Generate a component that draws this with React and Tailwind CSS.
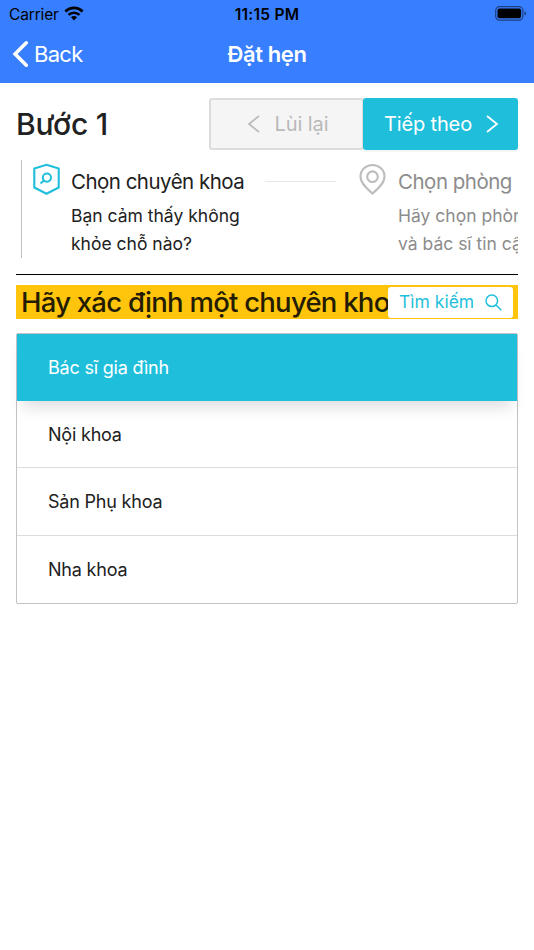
import React, { useState } from 'react';

const specialties = ['Bác sĩ gia đình', 'Nội khoa', 'Sản Phụ khoa', 'Nha khoa'];

const WifiIcon = () => (
  <svg className="w-5 h-[15px] ml-[5px] -mt-0.5" viewBox="0 0 20 15" fill="none">
    <path d="M1.4 5.4a12.4 12.4 0 0 1 17.2 0" stroke="#000" strokeWidth="2.8" />
    <path d="M4.5 8.9a8 8 0 0 1 11 0" stroke="#000" strokeWidth="2.6" />
    <path d="M10 14.4 6.9 11.3a4.4 4.4 0 0 1 6.2 0z" fill="#000" />
  </svg>
);

const BatteryIcon = () => (
  <svg className="w-8 h-[15px]" viewBox="0 0 32 15">
    <rect x="0.7" y="0.7" width="27.2" height="13.4" rx="3.8" fill="none" stroke="#1c3f80" strokeWidth="1.2" />
    <rect x="2.5" y="2.6" width="23.6" height="9.6" rx="2" fill="#000" />
    <path d="M29.5 5.2q1.7.6 1.7 2.2t-1.7 2.2z" fill="#1c3f80" />
  </svg>
);

const BackIcon = () => (
  <svg className="w-[18px] h-7" viewBox="0 0 18 28" fill="none">
    <path d="M15.3 2.8 4.1 14l11.2 11.2" stroke="#fff" strokeWidth="3.6" strokeLinecap="round" />
  </svg>
);

const ShieldIcon = () => (
  <svg className="w-[28px] h-8 shrink-0" viewBox="0 0 28 32" fill="none" stroke="#1fbfdc">
    <path d="M14.5 1.8 26.7 5.5v19L14.5 30.8 2.3 24.5v-19z" strokeWidth="2.1" />
    <circle cx="14.9" cy="14.6" r="4.1" strokeWidth="2" />
    <path d="m11.9 17.5-3.4 3.1" strokeWidth="2" />
  </svg>
);

const PinIcon = () => (
  <svg className="w-[28px] h-8 shrink-0" viewBox="0 0 28 32" fill="none" stroke="#bdbdbd" strokeWidth="2.1">
    <path d="M14.5 30.5c-5-4.4-12-10-12-17.1a12 11.4 0 0 1 24 0c0 7.1-7 12.7-12 17.1z" />
    <circle cx="14.5" cy="13.7" r="5.3" />
  </svg>
);

const App = () => {
  const [selected, setSelected] = useState(0);

  return (
    <div className="w-[534px] h-[950px] bg-white overflow-hidden font-['Inter',sans-serif] text-[#212121]">
      <header className="h-[83px] bg-[#387fff]">
        <div className="h-7 grid grid-cols-3 items-center pl-[7px] pr-[7px] text-black">
          <div className="flex items-center pl-0.5">
            <span className="text-[15.5px] tracking-[-0.15px] pt-px">Carrier</span>
            <WifiIcon />
          </div>
          <span className="text-center text-[15.5px] font-semibold tracking-[0.25px] pt-px">11:15 PM</span>
          <div className="flex justify-end -mt-px">
            <BatteryIcon />
          </div>
        </div>
        <div className="h-[52px] grid grid-cols-3 items-center pl-[11px] pr-[11px] text-white">
          <button className="flex items-center gap-[5px]">
            <BackIcon />
            <span className="text-[22px] tracking-[-0.7px]">Back</span>
          </button>
          <h1 className="text-center text-[22px] font-semibold tracking-[-0.4px]">Đặt hẹn</h1>
        </div>
      </header>

      <main className="px-4 pt-[15px]">
        <div className="flex h-[52px] items-center justify-between">
          <h2 className="text-[30px] font-medium tracking-[-0.2px]">Bước 1</h2>
          <div className="flex h-full text-[20px]">
            <button className="w-[155px] flex items-center justify-center gap-[15px] pl-0.5 bg-[#f5f5f5] border-2 border-[#dcdcdc] rounded-[3px] text-[#b9b9b9]">
              <svg className="w-[13px] h-[18px]" viewBox="0 0 13 18" fill="none" stroke="currentColor" strokeWidth="1.7">
                <path d="M12 1 2 9l10 8" />
              </svg>
              <span className="tracking-[-0.1px]">Lùi lại</span>
            </button>
            <button className="w-[155px] -ml-px flex items-center justify-center gap-[14px] pl-0.5 bg-[#1fbfdc] rounded-[3px] text-white shadow-[0_2px_1px_rgba(0,0,0,0.04)]">
              <span className="tracking-[-0.15px]">Tiếp theo</span>
              <svg className="w-[13px] h-[18px]" viewBox="0 0 13 18" fill="none" stroke="currentColor" strokeWidth="1.8">
                <path d="m1 1 10 8-10 8" />
              </svg>
            </button>
          </div>
        </div>

        <div className="mt-[10px] ml-[5px] h-[98px] flex overflow-hidden border-l border-[#bfbfc3]">
          <div className="w-[314px] shrink-0 flex gap-[11px] pl-[10px] pt-[3px]">
            <ShieldIcon />
            <div className="flex-1">
              <div className="h-[38px] flex items-center gap-[21px]">
                <h3 className="w-[173px] text-[20.5px] tracking-[-0.52px] whitespace-nowrap">Chọn chuyên khoa</h3>
                <div className="w-[71px] shrink-0 h-px bg-[#e8e8e8] -mt-0.5" />
              </div>
              <p className="w-[180px] pt-px text-[17.5px] leading-7">Bạn cảm thấy không<br />khỏe chỗ nào?</p>
            </div>
          </div>
          <div className="shrink-0 flex gap-[12px] pl-[22px] pt-[3px] text-[#8c8c8c]">
            <PinIcon />
            <div className="whitespace-nowrap">
              <h3 className="h-[38px] leading-[38px] text-[20.5px] tracking-[-0.5px]">Chọn phòng</h3>
              <p className="pt-px text-[17.5px] leading-7">Hãy chọn phòng<br />và bác sĩ tin cậy</p>
            </div>
          </div>
        </div>

        <hr className="mt-[16px] border-0 h-px bg-black" />

        <div className="mt-[10px] h-[34px] flex items-center bg-[#ffc40c] pl-[5px] pr-[5px]">
          <h2 className="w-[367px] overflow-hidden whitespace-nowrap text-[27.5px] leading-[34px] font-medium tracking-[-0.75px] text-[#241c02]">
            Hãy xác định một chuyên khoa
          </h2>
          <button className="w-[125px] h-[31px] shrink-0 flex items-center justify-between pl-[11px] pr-[11px] bg-white rounded-[3px] text-[#1fbfdc]">
            <span className="text-[17.5px] whitespace-nowrap">Tìm kiếm</span>
            <svg className="w-[17px] h-[17px]" viewBox="0 0 17 17" fill="none" stroke="currentColor" strokeWidth="1.5">
              <circle cx="6.8" cy="6.8" r="5.8" />
              <path d="m11 11 5.3 5.3" />
            </svg>
          </button>
        </div>

        <ul className="mt-[14px] border border-[#c3c3c7] rounded-[2px] text-[18px] tracking-[-0.2px]">
          {specialties.map((name, i) => (
            <li
              key={name}
              onClick={() => setSelected(i)}
              className={
                i === selected
                  ? 'h-[67px] flex items-center pl-[31px] bg-[#1fbfdc] text-white shadow-[0_12px_14px_-5px_rgba(0,0,0,0.12)]'
                  : 'h-[67.3px] flex items-center pl-[31px] border-b border-[#dcdcde] last:border-b-0'
              }
            >
              {name}
            </li>
          ))}
        </ul>
      </main>
    </div>
  );
};

export default App;
